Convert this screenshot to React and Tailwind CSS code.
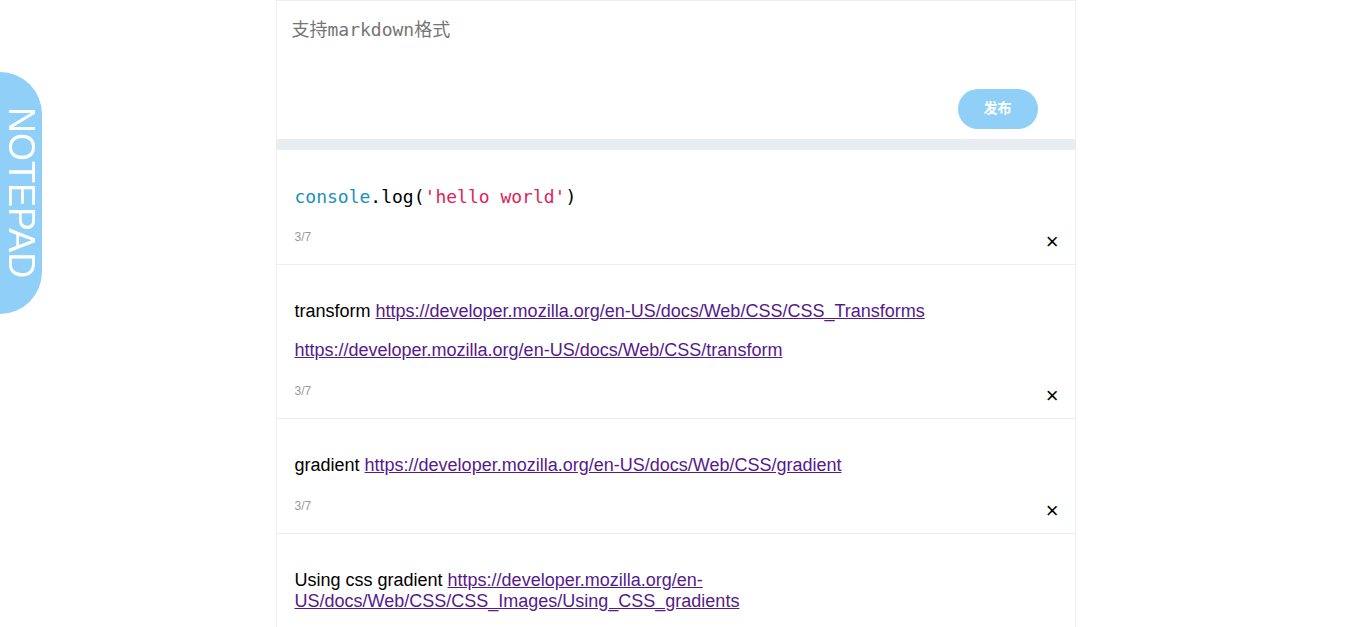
import React from 'react';

const notes = [
  {
    id: 1,
    type: 'code',
  },
  {
    id: 2,
    lines: [
      { label: 'transform ', href: 'https://developer.mozilla.org/en-US/docs/Web/CSS/CSS_Transforms' },
      { label: '', href: 'https://developer.mozilla.org/en-US/docs/Web/CSS/transform' },
    ],
  },
  {
    id: 3,
    lines: [{ label: 'gradient ', href: 'https://developer.mozilla.org/en-US/docs/Web/CSS/gradient' }],
  },
  {
    id: 4,
    lines: [
      {
        label: 'Using css gradient ',
        href: 'https://developer.mozilla.org/en-US/docs/Web/CSS/CSS_Images/Using_CSS_gradients',
      },
    ],
  },
];

const NoteCard = ({ note }) => (
  <div className="border-b border-[#eeeeee] pl-[18px] pr-[16px] pt-[36px]">
    {note.type === 'code' ? (
      <pre className="font-['DejaVu_Sans_Mono',monospace] text-[18px] leading-[21px] text-black">
        <span className="text-[#1990b8]">console</span>.log(
        <span className="text-[#e2225c]">'hello world'</span>)
      </pre>
    ) : (
      <div className="space-y-[18px]">
        {note.lines.map((line, i) => (
          <p key={i} className="text-[18px] leading-[21px] text-black">
            {line.label}
            <a href={line.href} className="text-[#551a8b] underline">
              {line.href}
            </a>
          </p>
        ))}
      </div>
    )}

    {/* meta + delete */}
    <div className="mt-[23px] flex h-[34px] items-start justify-between">
      <span className="text-[12px] leading-[14px] text-[#999999]">3/7</span>
      <button className="mt-[2px] text-[22px] leading-[20px] text-black">×</button>
    </div>
  </div>
);

const App = () => {
  return (
    <div className="min-h-screen bg-white font-['Liberation_Sans',Arial,sans-serif]">
      {/* side tab */}
      <div className="fixed left-0 top-[72px] flex h-[242px] w-[42px] items-center justify-center rounded-r-full bg-[#90cff7]">
        <span className="text-[36px] leading-none text-white [writing-mode:vertical-rl]">NOTEPAD</span>
      </div>

      <div className="mx-auto w-[800px] border-x border-t border-[#eeeeee]">
        {/* editor */}
        <textarea
          autoFocus
          placeholder="支持markdown格式"
          className="block h-[88px] w-full resize-none px-[15px] pt-[18px] font-['DejaVu_Sans_Mono','Noto_Sans_CJK_SC',monospace] text-[18px] leading-[21px] caret-black outline-none placeholder:text-[#757575]"
        />
        <div className="flex justify-end pb-[10px] pr-[37px]">
          <button className="flex h-10 w-20 items-center justify-center rounded-full bg-[#90cff7] pb-1 font-['Noto_Sans_CJK_SC',sans-serif] text-[14px] font-bold leading-none text-white">
            发布
          </button>
        </div>
        <div className="h-[11px] bg-[#e8edf1]" />

        {notes.map((note) => (
          <NoteCard key={note.id} note={note} />
        ))}
      </div>
    </div>
  );
};

export default App;
